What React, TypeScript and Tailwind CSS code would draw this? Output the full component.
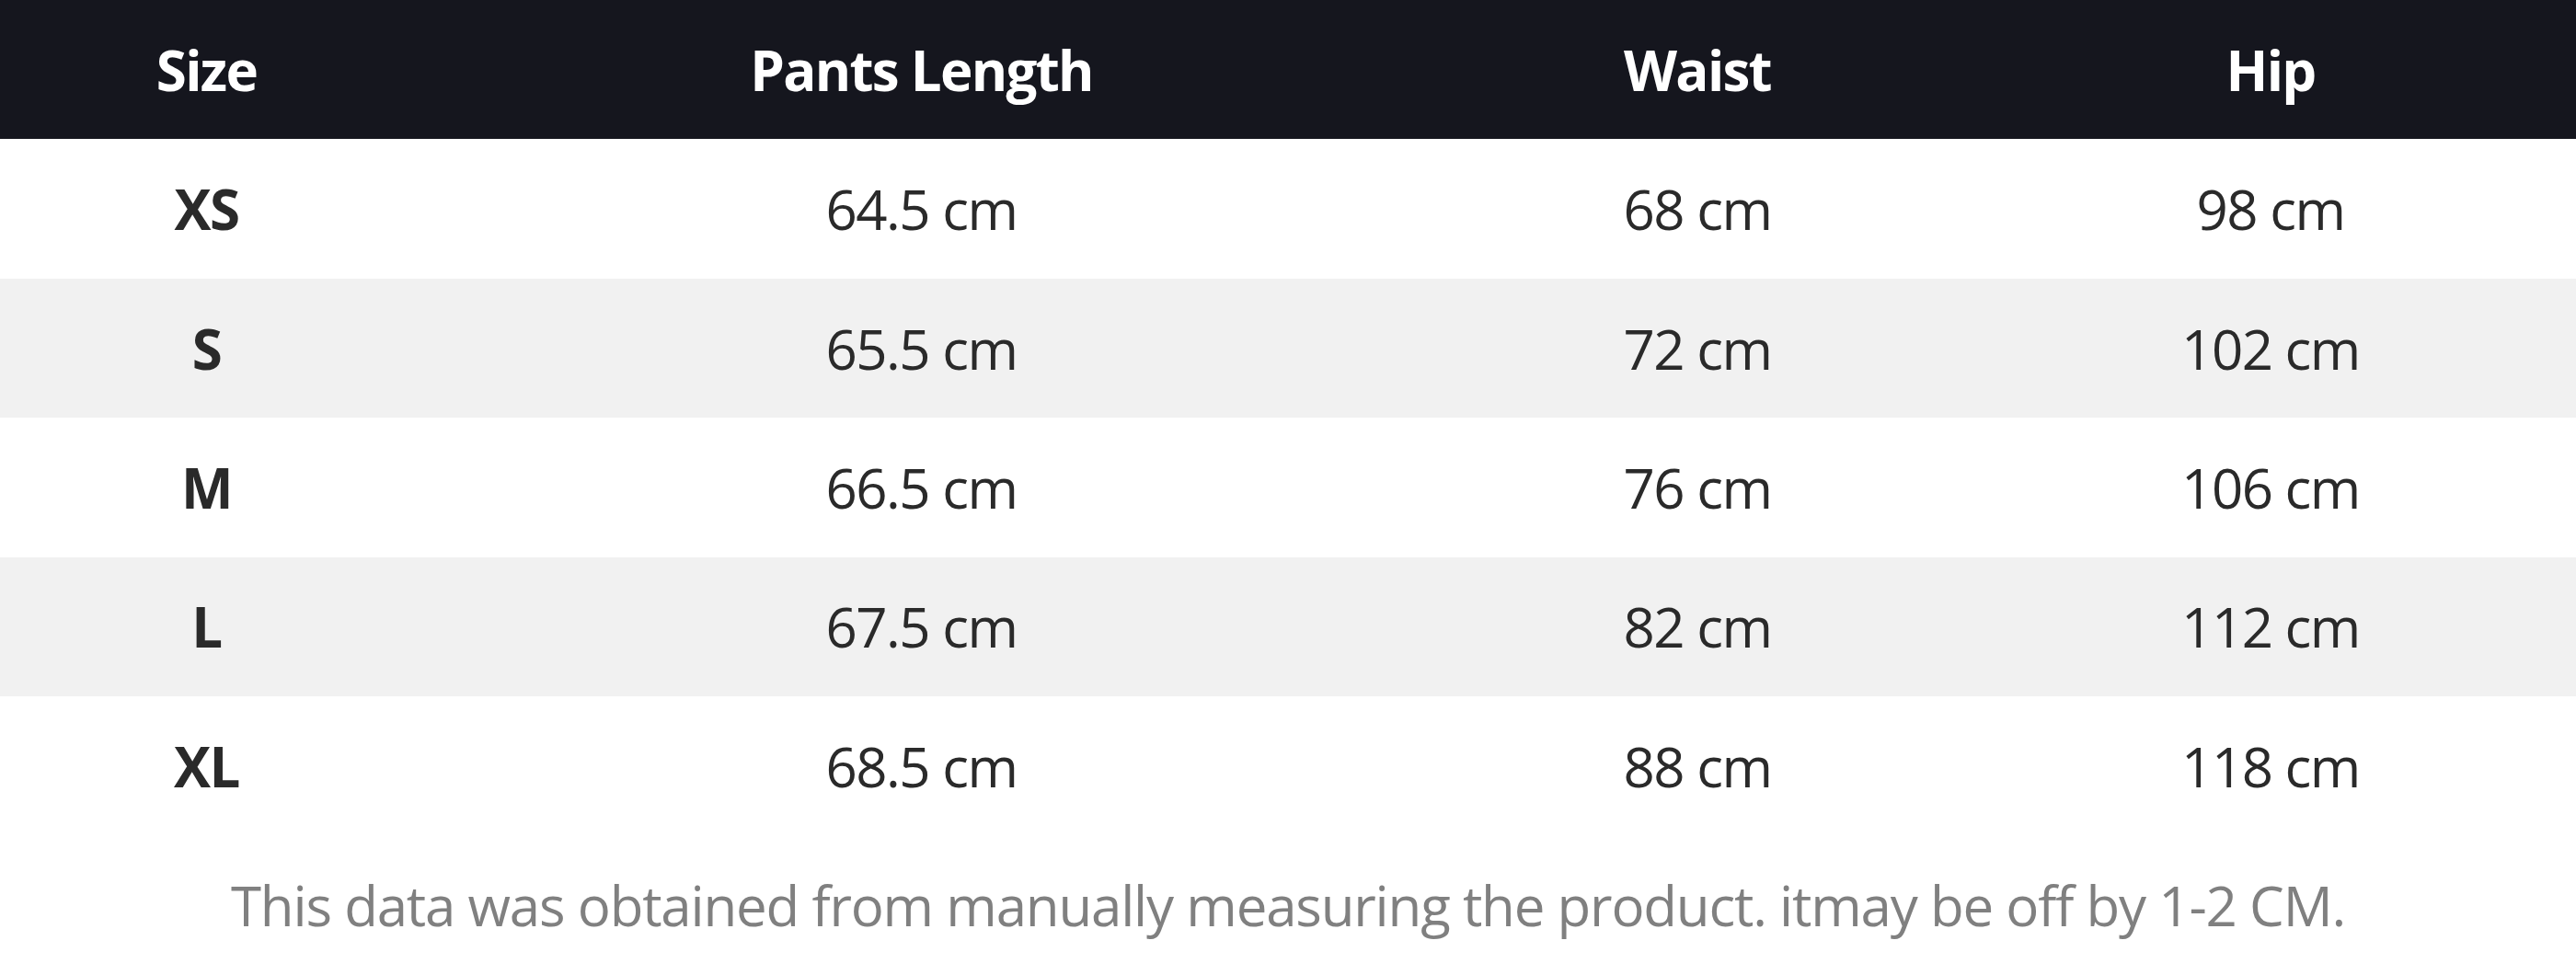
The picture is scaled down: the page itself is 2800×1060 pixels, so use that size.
import React from "react";

const rows = [
  ["XS", "64.5 cm", "68 cm", "98 cm"],
  ["S", "65.5 cm", "72 cm", "102 cm"],
  ["M", "66.5 cm", "76 cm", "106 cm"],
  ["L", "67.5 cm", "82 cm", "112 cm"],
  ["XL", "68.5 cm", "88 cm", "118 cm"],
];

const cols = "grid grid-cols-[449px_1105px_582px_664px] items-center";

export default function App() {
  return (
    <div className="w-[2800px] h-[1060px] grid grid-rows-7 bg-white font-['Open_Sans',sans-serif] text-[60px] leading-none tracking-[-1.5px]">
      <div className={`${cols} bg-[#15161e] text-white font-bold tracking-[-1.7px]`}>
        <div className="text-center">Size</div>
        <div className="text-center">Pants Length</div>
        <div className="text-center">Waist</div>
        <div className="text-center">Hip</div>
      </div>
      {rows.map((r, i) => (
        <div
          key={r[0]}
          className={`${cols} text-[#2a2a2a] ${i % 2 === 1 ? "bg-[#f1f1f1]" : "bg-white"}`}
        >
          <div className="text-center font-bold">{r[0]}</div>
          <div className="text-center">{r[1]}</div>
          <div className="text-center">{r[2]}</div>
          <div className="text-center">{r[3]}</div>
        </div>
      ))}
      <div className="flex items-center justify-center text-[#808080] tracking-[-1.2px]">
        This data was obtained from manually measuring the product. itmay be off by 1-2 CM.
      </div>
    </div>
  );
}
